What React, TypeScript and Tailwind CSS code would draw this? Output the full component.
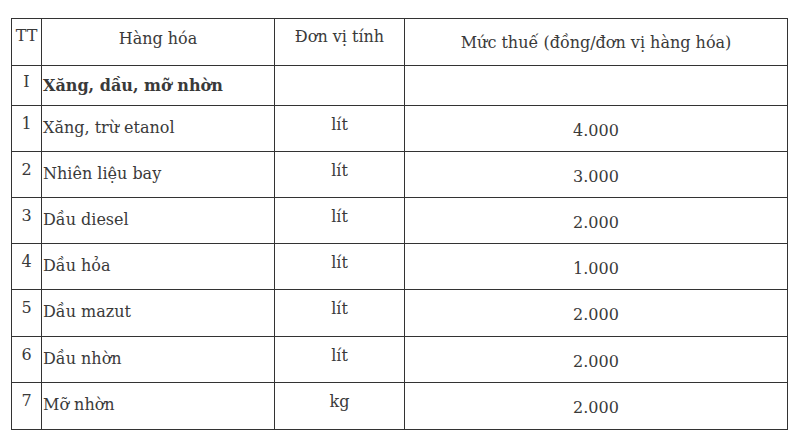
const rows = [
  { tt: "1", name: "Xăng, trừ etanol", unit: "lít", tax: "4.000", h: "h-[46px]" },
  { tt: "2", name: "Nhiên liệu bay", unit: "lít", tax: "3.000", h: "h-[46px]" },
  { tt: "3", name: "Dầu diesel", unit: "lít", tax: "2.000", h: "h-[46px]" },
  { tt: "4", name: "Dầu hỏa", unit: "lít", tax: "1.000", h: "h-[46px]" },
  { tt: "5", name: "Dầu mazut", unit: "lít", tax: "2.000", h: "h-[47px]" },
  { tt: "6", name: "Dầu nhờn", unit: "lít", tax: "2.000", h: "h-[46px]" },
  { tt: "7", name: "Mỡ nhờn", unit: "kg", tax: "2.000", h: "h-[47px]" },
];

const cell = "border border-[#333] align-top p-0";

export default function App() {
  return (
    <div className="w-[796px] h-[448px] bg-white pt-[18px] pl-[11px] font-['DejaVu_Serif',serif] text-[16px] leading-[20px] text-[#3a3a3a]">
      <table className="table-fixed border-collapse w-[777px]">
        <colgroup>
          <col className="w-[30px]" />
          <col className="w-[233px]" />
          <col className="w-[130px]" />
          <col className="w-[383px]" />
        </colgroup>
        <tbody>
          <tr className="h-[47px]">
            <td className={`${cell} text-center pt-[7px]`}>TT</td>
            <td className={`${cell} text-center pt-[10px]`}>Hàng hóa</td>
            <td className={`${cell} text-center pt-[8px]`}>Đơn vị tính</td>
            <td className={`${cell} text-center pt-[14px]`}>Mức thuế (đồng/đơn vị hàng hóa)</td>
          </tr>
          <tr className="h-[40px]">
            <td className={`${cell} text-center pt-[6px]`}>I</td>
            <td className={`${cell} pt-[10px] pl-px font-bold`}>Xăng, dầu, mỡ nhờn</td>
            <td className={cell}></td>
            <td className={cell}></td>
          </tr>
          {rows.map((r) => (
            <tr key={r.tt} className={r.h}>
              <td className={`${cell} text-center pt-[8px]`}>{r.tt}</td>
              <td className={`${cell} pt-[12px] pl-px`}>{r.name}</td>
              <td className={`${cell} text-center pt-[9px]`}>{r.unit}</td>
              <td className={`${cell} text-center pt-[15px]`}>{r.tax}</td>
            </tr>
          ))}
        </tbody>
      </table>
    </div>
  );
}
